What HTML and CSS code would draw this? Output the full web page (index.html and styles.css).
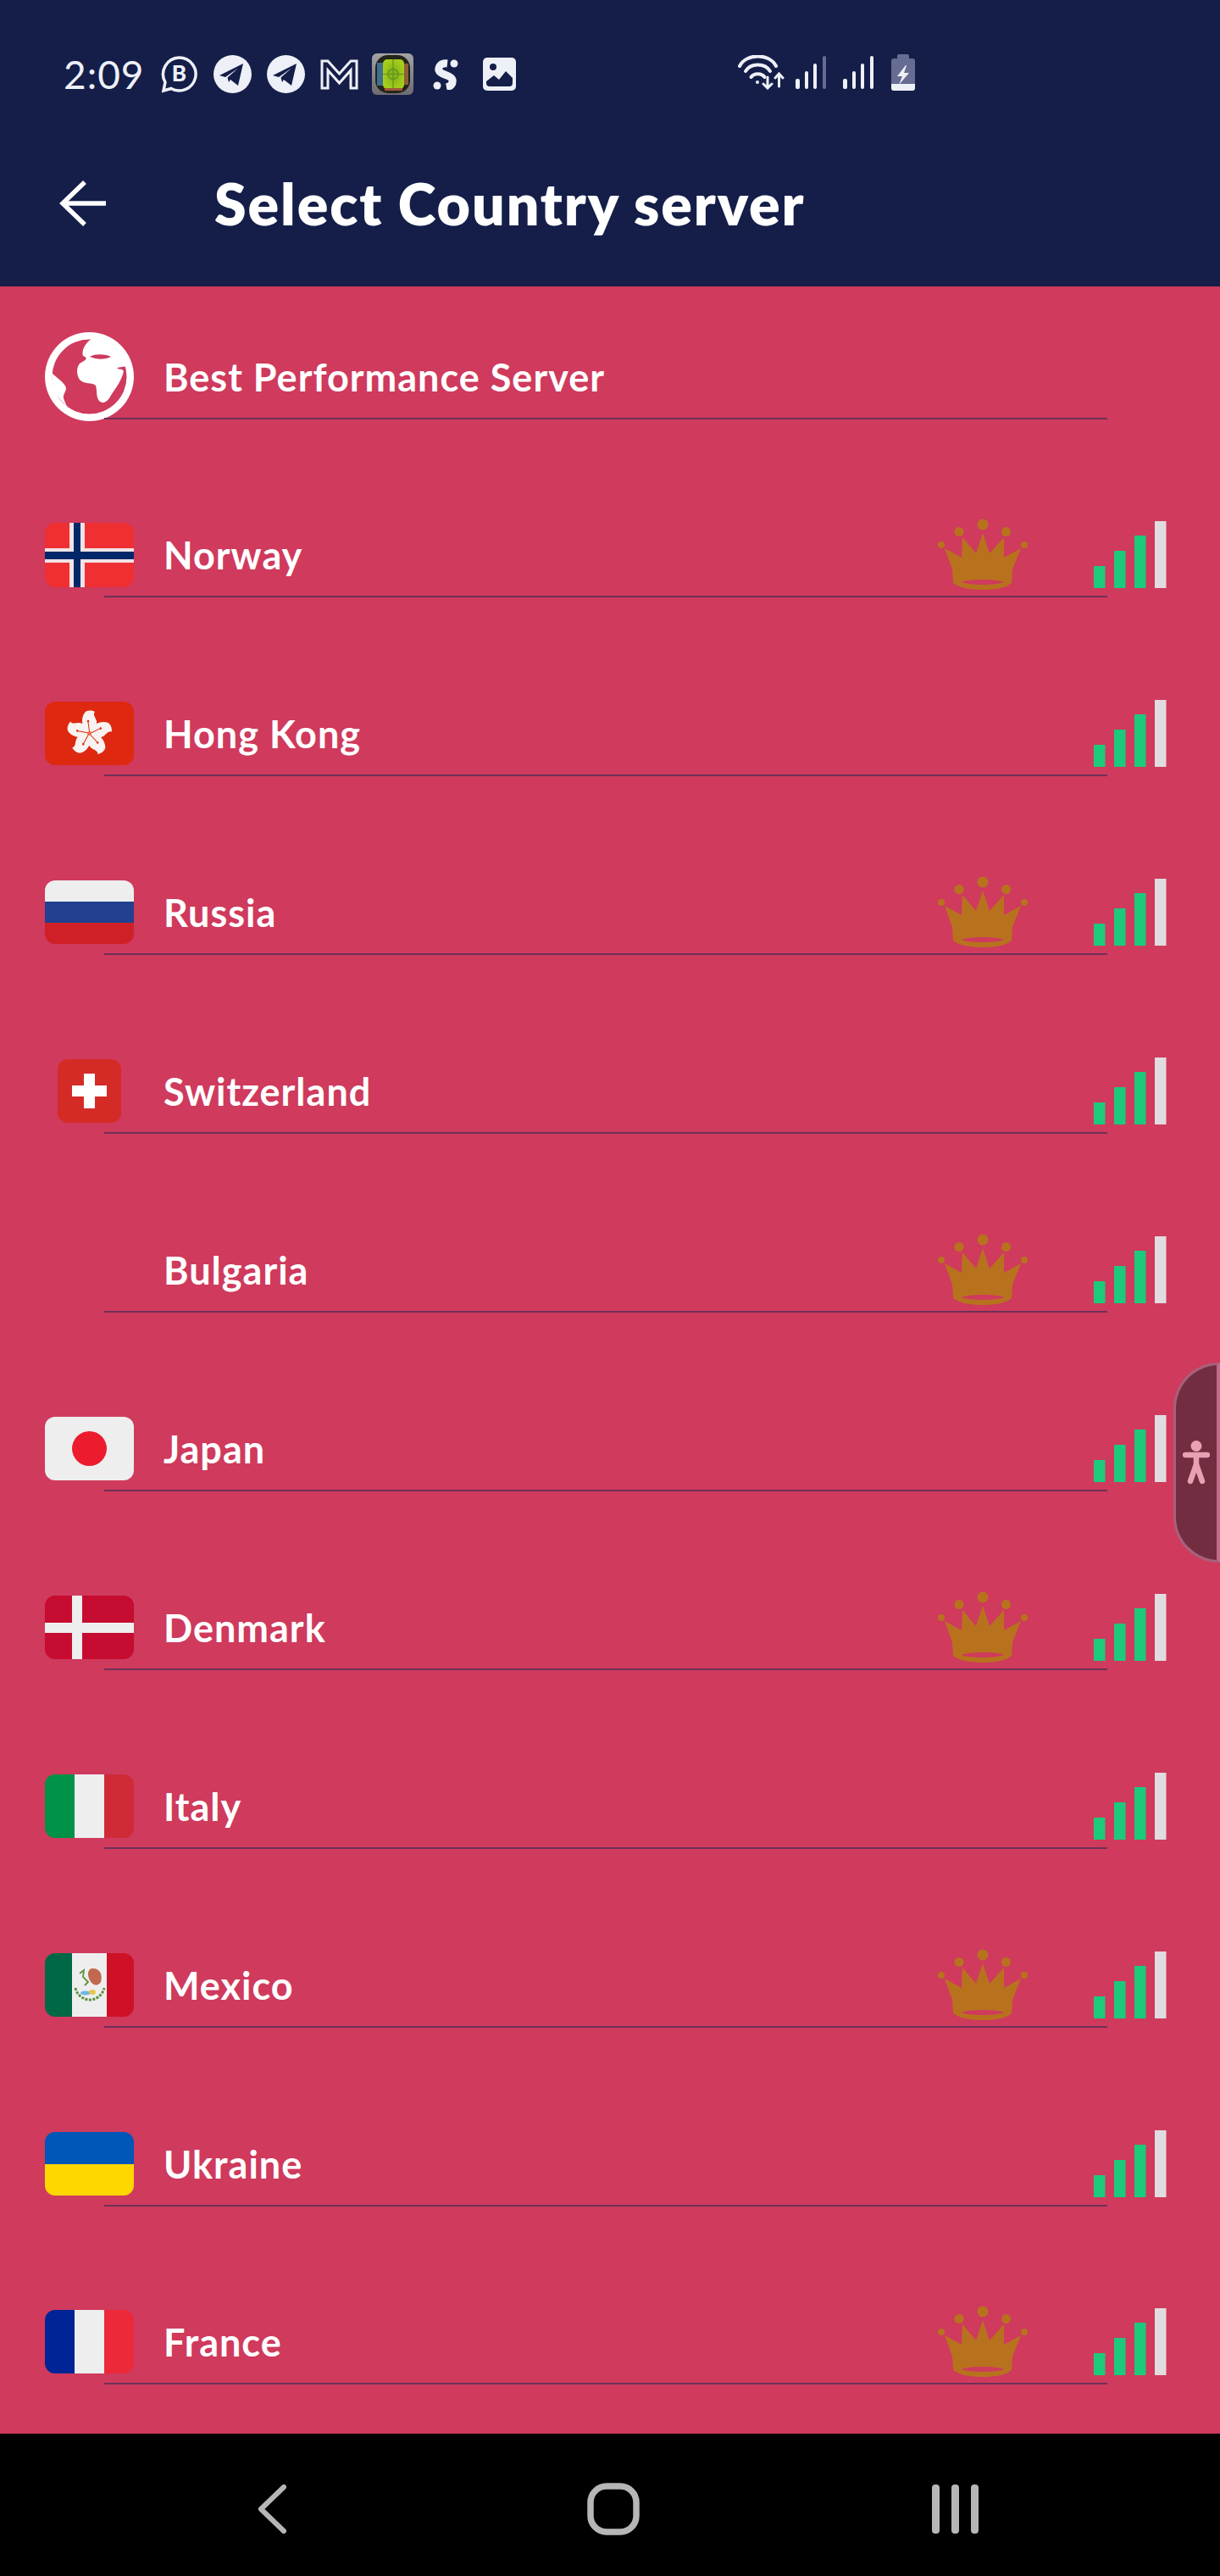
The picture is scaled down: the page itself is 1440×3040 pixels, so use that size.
FILE: index.html
```html
<!DOCTYPE html>
<html lang="en">
<head>
<meta charset="utf-8">
<title>Select Country server</title>
<link rel="stylesheet" href="styles.css">
</head>
<body>
<svg class="defs" width="0" height="0" aria-hidden="true">
  <defs>
    <linearGradient id="appbg" x1="0" y1="0" x2="0" y2="1"><stop offset="0" stop-color="#a3a3a5"/><stop offset="1" stop-color="#6c6c70"/></linearGradient>
    <radialGradient id="pitch"><stop offset="0" stop-color="#7fae14"/><stop offset="1" stop-color="#a4cc1c"/></radialGradient>
    <symbol id="crown" viewBox="0 0 106 85">
      <circle cx="53" cy="7" r="6.500"/><circle cx="25" cy="15.500" r="5.500"/><circle cx="80.500" cy="15.500" r="5.500"/><circle cx="4" cy="31" r="4"/><circle cx="102" cy="31" r="4"/>
      <path fill-rule="evenodd" d="M8 35 L28 46 L29 22 L45 41 L53 17 L61 41 L78 22 L78 46 L98 35 L88 60 L87 76 C80 82 68 84 53 84 C38 84 26 82 18 76 L17 60 Z M28 75 C35 71 71 71 78 75 C71 79 35 79 28 75 Z"/>
    </symbol>
    <symbol id="bars" viewBox="0 0 86 79">
      <rect x="0" y="53" width="13.500" height="26" fill="#1bcb7b"/>
      <rect x="24" y="35" width="13.500" height="44" fill="#1bcb7b"/>
      <rect x="48" y="17" width="13.500" height="62" fill="#1bcb7b"/>
      <rect x="72" y="0" width="13.500" height="79" fill="#e0dcdf"/>
    </symbol>
    <symbol id="tg" viewBox="0 0 45 45">
      <circle cx="22.500" cy="22.500" r="22.500" fill="#eef0f7"/>
      <path d="M7 24 L35 10 L29 36 L20 29 L18 32 L16.500 26.500 L29 15.500 L14 26 Z" fill="#141e48"/>
    </symbol>
    <g id="petal">
      <path d="M52 37 C43 31 42 20 47 13 C50 10 55 10 59 12 C56 15 60 19 61 23 C62 30 57 33 52 37 Z" fill="#f8f3f0"/>
      <path d="M52.500 35 L51 24" stroke="#de2910" stroke-width="1"/>
      <circle cx="51" cy="23" r="1.300" fill="#de2910"/>
    </g>
  </defs>
</svg>

<header class="appbar">
  <div class="status">
    <span class="clock">2:09</span>
    <div class="notes">
      <svg class="ni" viewBox="0 0 45 45"><path d="M22.500 3 A19.500 19.500 0 1 1 13 39.500 L4 42 L6 32 A19.500 19.500 0 0 1 22.500 3 Z" fill="none" stroke="#eef0f7" stroke-width="3.500"/><text x="22.500" y="31" class="nb">B</text></svg>
      <svg class="ni"><use href="#tg"/></svg>
      <svg class="ni"><use href="#tg"/></svg>
      <svg class="ni" viewBox="0 0 45 45"><path d="M2 7 H9 L22.500 22 L36 7 H43 V39 H36 V18 L22.500 33 L9 18 V39 H2 Z" fill="none" stroke="#eef0f7" stroke-width="3"/></svg>
      <svg class="nb-app" viewBox="0 0 49 49"><rect width="49" height="49" rx="6" fill="url(#appbg)"/><rect x="4" y="2" width="41" height="45" rx="15" fill="#23241a"/><rect x="6" y="11" width="8" height="27" fill="#3f6f8f"/><rect x="37" y="12" width="6" height="25" fill="#8a5f3a"/><rect x="13" y="7" width="25" height="35" rx="5" fill="url(#pitch)"/><rect x="15" y="41" width="21" height="3" fill="#a0563a"/><circle cx="25" cy="24.500" r="6" fill="none" stroke="#5f9420" stroke-width="1.500"/><path d="M13 24.500 H38 M25 7 V42" stroke="#5f9420" stroke-width="1.200"/></svg>
      <svg class="ni-s" viewBox="0 0 30 36"><path d="M17 5 C9 4 6 9 7 13 C9 19 21 18 23 24 C24 29 21 32 16 33" fill="none" stroke="#eef0f7" stroke-width="9"/><circle cx="25" cy="5" r="4.500" fill="#eef0f7"/><circle cx="5" cy="31" r="4.500" fill="#eef0f7"/></svg>
      <svg class="ni-p" viewBox="0 0 39 39"><rect width="39" height="39" rx="5" fill="#eef0f7"/><circle cx="12" cy="11" r="4" fill="#141e48"/><path d="M4 28 L13 21 L19 26 L27 16 L35 24 V30 Q35 34 31 34 H8 Q4 34 4 30 Z" fill="#141e48"/></svg>
    </div>
    <div class="sys">
      <svg class="wifi" viewBox="0 0 56 41" fill="none" stroke="#eef0f7" stroke-linecap="round"><path d="M2 13 C10 -2.500 37 -2.500 45 13" stroke-width="4"/><path d="M9 19 C15 9 32 9 38 19" stroke-width="4"/><path d="M15.500 26 C19 21 28 21 31.500 26" stroke-width="4"/><circle cx="23" cy="32" r="2" fill="#eef0f7" stroke="none"/><path d="M35 26 V39 M30 34 L35 39 L40 34 M48.500 37 V23 M44 27 L48.500 22 L53 27" stroke-width="3"/></svg>
      <svg class="sig" viewBox="0 0 36 39"><rect x="0" y="27" width="5" height="12" rx="2" fill="#eef0f7"/><rect x="11" y="18" width="4" height="21" rx="2" fill="#eef0f7"/><rect x="21" y="9" width="4" height="30" rx="2" fill="#eef0f7"/><rect x="32" y="0" width="4" height="39" rx="2" fill="#666c92"/></svg>
      <svg class="sig sig2" viewBox="0 0 36 39"><rect x="0" y="27" width="5" height="12" rx="2" fill="#eef0f7"/><rect x="11" y="18" width="4" height="21" rx="2" fill="#eef0f7"/><rect x="21" y="9" width="4" height="30" rx="2" fill="#eef0f7"/><rect x="32" y="0" width="4" height="39" rx="2" fill="#eef0f7"/></svg>
      <svg class="bat" viewBox="0 0 28 43"><path d="M7 2 Q7 0 9 0 H19 Q21 0 21 2 V5 H25 Q28 5 28 8 V35 H0 V8 Q0 5 3 5 H7 Z" fill="#666c92"/><path d="M0 35 H28 V40 Q28 43 25 43 H3 Q0 43 0 40 Z" fill="#eef0f7"/><path d="M17 13 L7 26 H13 L9 36 L21 22 H15 L18 13 Z" fill="#eef0f7"/></svg>
    </div>
  </div>
  <div class="toolbar">
    <svg class="back" viewBox="0 0 56 56" fill="none" stroke="#fff" stroke-width="5.500"><path d="M55 28 H4"/><path d="M30 3 L4 28 L30 53"/></svg>
    <h1 class="title">Select Country server</h1>
  </div>
</header>

<main class="list">
  <div class="row row-first">
    <div class="main">
      <div class="slot"><svg class="globe" viewBox="0 0 105 105"><circle cx="52.500" cy="52.500" r="52.500" fill="#fff"/><circle cx="52.500" cy="52.500" r="44" fill="#cf3a5d"/><path d="M55 8 C47 13 43 22 45 28 C52 31 48 33 41 37 C37 42 37 50 41 56 C46 62 56 59 60 63 C62 70 60 76 64 81 C68 85 72 83 76 78 C80 70 90 60 93 46 C90 42 87 45 85 42 L97 40 C92 22 76 6 55 8 Z" fill="#fff"/><path d="M53 29 C60 25 72 26 78 29 C70 33 60 32 53 29 Z" fill="#cf3a5d"/><path d="M8 48 C14 54 24 60 25 66 C25 70 21 74 22 78 C24 84 26 88 30 93 L10 70 Z" fill="#fff"/></svg></div>
      <span class="name">Best Performance Server</span>
    </div>
    <div class="rule"></div>
  </div>

  <div class="row">
    <div class="main">
      <div class="slot"><svg class="flag flag-no" viewBox="0 0 105 76"><rect width="105" height="76" fill="#ef2f31"/><path d="M29 0 H47 V30 H105 V47 H47 V76 H29 V47 H0 V30 H29 Z" fill="#f0e4e6"/><path d="M34 0 H42 V34 H105 V43 H42 V76 H34 V43 H0 V34 H34 Z" fill="#002868"/></svg></div>
      <span class="name">Norway</span>
      <svg class="crown"><use href="#crown"/></svg>
      <svg class="bars"><use href="#bars"/></svg>
    </div>
    <div class="rule"></div>
  </div>

  <div class="row">
    <div class="main">
      <div class="slot"><svg class="flag" viewBox="0 0 105 75"><rect width="105" height="75" fill="#de2910"/><use href="#petal"/><use href="#petal" transform="rotate(72 52.500 37.500)"/><use href="#petal" transform="rotate(144 52.500 37.500)"/><use href="#petal" transform="rotate(216 52.500 37.500)"/><use href="#petal" transform="rotate(288 52.500 37.500)"/><circle cx="52.500" cy="37.500" r="2.500" fill="#ef6a4a"/></svg></div>
      <span class="name">Hong Kong</span>
      <svg class="bars"><use href="#bars"/></svg>
    </div>
    <div class="rule"></div>
  </div>

  <div class="row">
    <div class="main">
      <div class="slot"><svg class="flag" viewBox="0 0 105 75"><rect width="105" height="25" fill="#eeeeef"/><rect y="25" width="105" height="25" fill="#22408f"/><rect y="50" width="105" height="25" fill="#cf2028"/></svg></div>
      <span class="name">Russia</span>
      <svg class="crown"><use href="#crown"/></svg>
      <svg class="bars"><use href="#bars"/></svg>
    </div>
    <div class="rule"></div>
  </div>

  <div class="row">
    <div class="main">
      <div class="slot"><svg class="flag flag-sq" viewBox="0 0 75 75"><rect width="75" height="75" fill="#d52b26"/><path d="M31 17 H44 V31 H58 V44 H44 V58 H31 V44 H17 V31 H31 Z" fill="#fff"/></svg></div>
      <span class="name">Switzerland</span>
      <svg class="bars"><use href="#bars"/></svg>
    </div>
    <div class="rule"></div>
  </div>

  <div class="row">
    <div class="main">
      <div class="slot"></div>
      <span class="name">Bulgaria</span>
      <svg class="crown"><use href="#crown"/></svg>
      <svg class="bars"><use href="#bars"/></svg>
    </div>
    <div class="rule"></div>
  </div>

  <div class="row">
    <div class="main">
      <div class="slot"><svg class="flag" viewBox="0 0 105 75"><rect width="105" height="75" fill="#eeeeef"/><circle cx="52.500" cy="37.500" r="20.500" fill="#ec1c2e"/></svg></div>
      <span class="name">Japan</span>
      <svg class="bars"><use href="#bars"/></svg>
    </div>
    <div class="rule"></div>
  </div>

  <div class="row">
    <div class="main">
      <div class="slot"><svg class="flag" viewBox="0 0 105 75"><rect width="105" height="75" fill="#c60c30"/><path d="M32 0 H44 V32 H105 V44 H44 V75 H32 V44 H0 V32 H32 Z" fill="#eeeeef"/></svg></div>
      <span class="name">Denmark</span>
      <svg class="crown"><use href="#crown"/></svg>
      <svg class="bars"><use href="#bars"/></svg>
    </div>
    <div class="rule"></div>
  </div>

  <div class="row">
    <div class="main">
      <div class="slot"><svg class="flag" viewBox="0 0 105 75"><rect width="35" height="75" fill="#009246"/><rect x="35" width="35" height="75" fill="#eeeeef"/><rect x="70" width="35" height="75" fill="#ce2b37"/></svg></div>
      <span class="name">Italy</span>
      <svg class="bars"><use href="#bars"/></svg>
    </div>
    <div class="rule"></div>
  </div>

  <div class="row">
    <div class="main">
      <div class="slot"><svg class="flag" viewBox="0 0 105 75"><rect width="32" height="75" fill="#006847"/><rect x="32" width="41" height="75" fill="#eeeeef"/><rect x="73" width="32" height="75" fill="#ce1126"/><path d="M55 18 C63 17 69 23 66 34 C62 40 56 38 53 32 C50 26 50 20 55 18 Z" fill="#c1694f"/><path d="M41 24 L46 20 L45 28 L51 34 L47 38" fill="none" stroke="#5c913b" stroke-width="1.800"/><path d="M36 41 C38 50 46 55 53 55 C60 55 68 50 70 41" fill="none" stroke="#5c913b" stroke-width="3" stroke-dasharray="3 1.500"/><ellipse cx="48" cy="47" rx="6" ry="2.500" fill="#6fb4e8"/><ellipse cx="56" cy="46" rx="4" ry="3" fill="#e8c64a"/></svg></div>
      <span class="name">Mexico</span>
      <svg class="crown"><use href="#crown"/></svg>
      <svg class="bars"><use href="#bars"/></svg>
    </div>
    <div class="rule"></div>
  </div>

  <div class="row">
    <div class="main">
      <div class="slot"><svg class="flag" viewBox="0 0 105 75"><rect width="105" height="38" fill="#0057b7"/><rect y="38" width="105" height="37" fill="#ffd700"/></svg></div>
      <span class="name">Ukraine</span>
      <svg class="bars"><use href="#bars"/></svg>
    </div>
    <div class="rule"></div>
  </div>

  <div class="row">
    <div class="main">
      <div class="slot"><svg class="flag" viewBox="0 0 105 75"><rect width="35" height="75" fill="#002395"/><rect x="35" width="35" height="75" fill="#eeeeef"/><rect x="70" width="35" height="75" fill="#ed2939"/></svg></div>
      <span class="name">France</span>
      <svg class="crown"><use href="#crown"/></svg>
      <svg class="bars"><use href="#bars"/></svg>
    </div>
    <div class="rule"></div>
  </div>

  <aside class="a11y">
    <svg class="a11y-icon" viewBox="0 0 32 52"><circle cx="16" cy="6.500" r="6.500" fill="#e9a0b2"/><path d="M3 17 H29 M16 17 V30 M16 28 L9 48 M16 28 L23 48" fill="none" stroke="#e9a0b2" stroke-width="6.500" stroke-linecap="round"/></svg>
  </aside>
</main>

<nav class="navbar">
  <svg class="nav-back" viewBox="0 0 35 58" fill="none" stroke="#b6b6b6" stroke-width="6" stroke-linecap="round" stroke-linejoin="round"><path d="M31 3 L4 29 L31 55"/></svg>
  <svg class="nav-home" viewBox="0 0 62 62" fill="none" stroke="#b6b6b6" stroke-width="7.500"><rect x="4" y="4" width="54" height="54" rx="19"/></svg>
  <svg class="nav-menu" viewBox="0 0 55 58" fill="#b6b6b6"><rect x="0" y="0" width="9" height="58" rx="4"/><rect x="23" y="0" width="9" height="58" rx="4"/><rect x="46" y="0" width="9" height="58" rx="4"/></svg>
</nav>
</body>
</html>
```

FILE: styles.css
```css
* { box-sizing: border-box; }

html, body { margin: 0; padding: 0; }

body {
  width: 1440px;
  height: 3040px;
  display: flex;
  flex-direction: column;
  overflow: hidden;
  background: #000;
  font-family: "Lato", "Liberation Sans", sans-serif;
  color: #fff;
}

.defs { position: absolute; }

.appbar {
  height: 338px;
  flex: none;
  background: #141e48;
}

.status {
  height: 176px;
  padding: 63px 0 0 75px;
  display: flex;
  align-items: flex-start;
}

.clock {
  width: 114px;
  font-size: 46px;
  font-weight: 400;
  line-height: 50px;
  letter-spacing: 1px;
  color: #eef0f7;
}

.notes {
  display: flex;
  align-items: center;
  height: 49px;
}

.ni { width: 45px; height: 45px; margin-right: 18px; flex: none; }
.nb { font-family: "Lato", sans-serif; font-weight: 900; font-size: 26px; text-anchor: middle; fill: #eef0f7; }
.nb-app { width: 49px; height: 49px; margin: 0 23px 0 -2px; flex: none; }
.ni-s { width: 30px; height: 36px; margin-right: 29px; flex: none; }
.ni-p { width: 39px; height: 39px; flex: none; }

.sys {
  display: flex;
  align-items: center;
  height: 45px;
  margin-left: 262px;
}

.wifi { width: 56px; height: 41px; flex: none; }
.sig { width: 36px; height: 39px; margin-left: 12px; flex: none; }
.sig2 { margin-left: 20px; }
.bat { width: 28px; height: 43px; margin-left: 21px; flex: none; }

.toolbar {
  display: flex;
  align-items: center;
  padding-left: 70px;
  height: 128px;
}

.back { width: 56px; height: 56px; flex: none; }

.title {
  margin: 0 0 0 127px;
  font-size: 68px;
  font-weight: 800;
  line-height: 80px;
  letter-spacing: 1.9px;
}

.list {
  position: relative;
  height: 2534px;
  flex: none;
  background: #cf3a5d;
}

.row {
  height: 210.9px;
  display: flex;
  flex-direction: column;
  justify-content: flex-end;
}

.row-first { height: 156.6px; }

.main {
  height: 85px;
  margin-bottom: 6px;
  padding: 0 63px 0 53px;
  display: flex;
  align-items: center;
}

.slot {
  width: 105px;
  height: 75px;
  flex: none;
  display: flex;
  justify-content: center;
  align-items: center;
}

.flag {
  width: 105px;
  height: 75px;
  border-radius: 12px;
  display: block;
  flex: none;
}

.flag-no { height: 76px; }
.flag-sq { width: 75px; }

.globe { width: 105px; height: 105px; flex: none; }

.name {
  margin: 1px 0 0 35px;
  font-size: 45px;
  font-weight: 700;
  line-height: 56px;
  letter-spacing: 1px;
}

.crown {
  width: 106px;
  height: 85px;
  margin-left: auto;
  fill: #b8721e;
  flex: none;
}

.bars {
  width: 86px;
  height: 79px;
  margin-left: 78px;
  flex: none;
}

.name + .bars { margin-left: auto; }

.rule {
  height: 2px;
  margin: 0 133px 0 123px;
  background: #6e3057;
  flex: none;
}

.a11y {
  position: absolute;
  right: 0;
  top: 1270px;
  width: 55px;
  height: 236px;
  display: flex;
  align-items: center;
  justify-content: center;
  background: #722d41;
  border: 3px solid #a8607a;
  border-right: 4px solid #c06c8a;
  border-radius: 54px 0 0 54px;
}

.a11y-icon { width: 32px; height: 52px; flex: none; }

.navbar {
  flex: 1;
  background: #000;
  display: flex;
  align-items: center;
  padding: 10px 0 0 304px;
}

.nav-back { width: 35px; height: 58px; flex: none; }
.nav-home { width: 62px; height: 62px; margin-left: 354px; flex: none; }
.nav-menu { width: 55px; height: 58px; margin-left: 345px; flex: none; }
```
